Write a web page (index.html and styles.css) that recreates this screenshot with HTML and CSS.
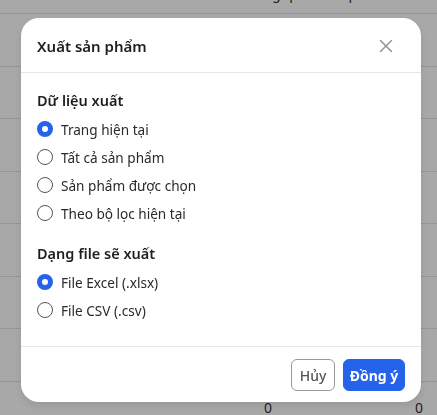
FILE: index.html
```html
<!DOCTYPE html>
<html lang="vi">
<head>
<meta charset="utf-8">
<link rel="stylesheet" href="styles.css">
</head>
<body>
<div class="page">
  <div class="row row-head"><span class="cell c1"></span><span class="cell c2 head-text">Tổng quan sản phẩm</span><span class="cell c3"></span></div>
  <div class="row"></div>
  <div class="row"></div>
  <div class="row"></div>
  <div class="row"></div>
  <div class="row"></div>
  <div class="row"></div>
  <div class="row"></div>
  <div class="row"><span class="cell c1"></span><span class="cell c2 num">0</span><span class="cell c3 num">0</span></div>
</div>
<div class="overlay">
  <div class="modal">
    <div class="modal-header">
      <h2 class="title">Xuất sản phẩm</h2>
      <button class="close" aria-label="Đóng">
        <svg width="14" height="14" viewBox="0 0 14 14"><path d="M1.5 1.5 L12.5 12.5 M12.5 1.5 L1.5 12.5" stroke="#8f9399" stroke-width="1.5" stroke-linecap="round" fill="none"/></svg>
      </button>
    </div>
    <div class="modal-body">
      <div class="section">
        <div class="section-label">Dữ liệu xuất</div>
        <div class="options">
          <label class="option"><span class="radio checked"></span>Trang hiện tại</label>
          <label class="option"><span class="radio"></span>Tất cả sản phẩm</label>
          <label class="option"><span class="radio"></span>Sản phẩm được chọn</label>
          <label class="option"><span class="radio"></span>Theo bộ lọc hiện tại</label>
        </div>
      </div>
      <div class="section">
        <div class="section-label">Dạng file sẽ xuất</div>
        <div class="options">
          <label class="option"><span class="radio checked"></span>File Excel (.xlsx)</label>
          <label class="option"><span class="radio"></span>File CSV (.csv)</label>
        </div>
      </div>
    </div>
    <div class="modal-footer">
      <button class="btn btn-cancel">Hủy</button>
      <button class="btn btn-ok">Đồng ý</button>
    </div>
  </div>
</div>
</body>
</html>
```

FILE: styles.css
```css
* { box-sizing: border-box; }
html, body { margin: 0; padding: 0; }
body {
  width: 437px;
  height: 415px;
  overflow: hidden;
  background: #fff;
  font-family: "Noto Sans", "Liberation Sans", sans-serif;
  color: #222;
}
.page {
  display: flex;
  flex-direction: column;
  padding-top: 13px;
}
.row {
  height: 52.5px;
  flex: none;
  border-top: 1px solid #e2e2e2;
  display: flex;
  font-size: 14px;
  color: #333;
}
.row-head {
  height: 0;
  border-top: none;
  position: relative;
  top: -29px;
}
.head-text { white-space: nowrap; padding-left: 8px; }
.cell { display: block; }
.c1 { width: 240px; flex: none; }
.c2 { width: 150px; flex: none; }
.c3 { flex: 1; }
.num { padding-top: 18px; line-height: 16px; }
.row:last-child .c2 { padding-left: 24px; }
.row:last-child .c3 { padding-left: 25px; }

.overlay {
  position: fixed;
  inset: 0;
  background: rgba(0, 0, 0, 0.34);
  display: flex;
  justify-content: flex-start;
  align-items: flex-start;
  padding: 18px 0 0 21px;
}
.modal {
  width: 400px;
  height: 384px;
  background: #fff;
  border-radius: 18px;
  display: flex;
  flex-direction: column;
  box-shadow: 0 4px 10px rgba(0,0,0,0.1);
}
.modal-header {
  height: 55px;
  flex: none;
  border-bottom: 1px solid #e6e6e6;
  display: flex;
  align-items: center;
  justify-content: space-between;
  padding: 0 28px 0 16px;
}
.title {
  margin: 0;
  font-size: 15px;
  font-weight: 600;
  color: #1f1f1f;
  padding-top: 1px;
}
.close {
  border: none;
  background: none;
  padding: 0;
  width: 14px;
  height: 14px;
  display: flex;
  margin-top: 2px;
}
.modal-body {
  flex: 1;
  padding: 17px 16px 0;
  display: flex;
  flex-direction: column;
  gap: 16px;
}
.section-label {
  font-size: 14.5px;
  font-weight: 600;
  line-height: 20px;
  color: #1f1f1f;
}
.options {
  margin-top: 5px;
  display: flex;
  flex-direction: column;
}
.option {
  height: 28px;
  display: flex;
  align-items: center;
  gap: 8px;
  font-size: 13.6px;
  color: #2a2a2a;
}
.radio {
  width: 16px;
  height: 16px;
  border-radius: 50%;
  border: 1.3px solid #555;
  background: #fff;
  flex: none;
}
.radio.checked {
  border: 5px solid #2563eb;
}
.modal-footer {
  height: 56px;
  flex: none;
  border-top: 1px solid #e6e6e6;
  display: flex;
  justify-content: flex-end;
  align-items: flex-start;
  gap: 8px;
  padding: 12px 16px 0;
}
.btn {
  height: 32px;
  border-radius: 6px;
  font-family: inherit;
  font-size: 14px;
  padding: 0;
  white-space: nowrap;
}
.btn-cancel {
  width: 44px;
  background: #fff;
  border: 1px solid #9a9a9a;
  color: #555;
  font-weight: 500;
}
.btn-ok {
  width: 62px;
  background: #2563eb;
  border: 1px solid #2563eb;
  color: #fff;
  font-weight: 700;
}
```
